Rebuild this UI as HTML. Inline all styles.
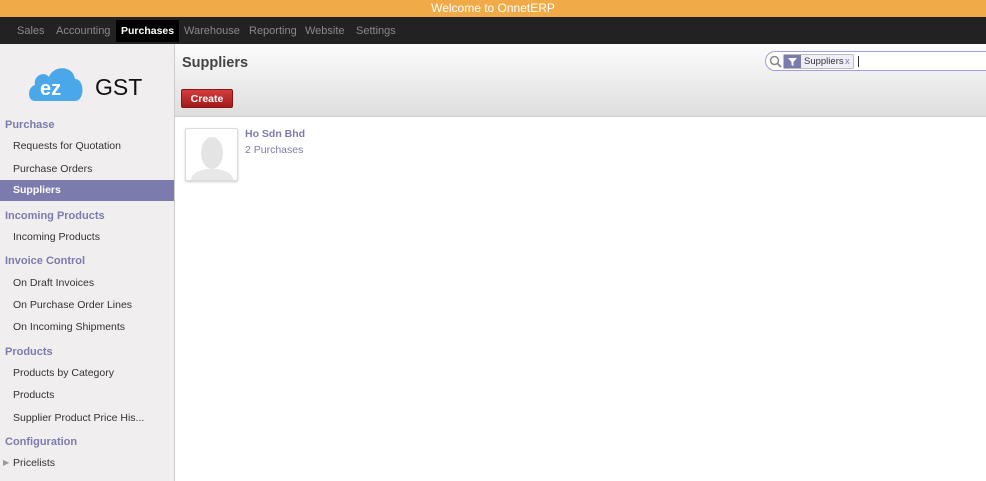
<!DOCTYPE html><html><head><style>
*{margin:0;padding:0;box-sizing:border-box}
body{width:986px;height:481px;overflow:hidden;font-family:"Liberation Sans",Arial,sans-serif;font-size:11px;background:#fff;position:relative}
.top{height:17px;background:#f0ab48;color:#fff;text-align:center;font-size:12px;line-height:17px}
.nav{height:27px;background:#222;position:relative}
.nav span{position:absolute;top:1px;line-height:27px;color:#8a8a8a;font-size:11px}
.nav .a{background:#000;color:#fff;font-weight:bold;padding:0 5px;top:3px;line-height:22px;font-size:10.5px}
.side{position:absolute;left:0;top:44px;width:175px;height:437px;background:#f0eeee;border-right:1px solid #ccc}
.s{position:absolute;left:0;width:174px;font-size:10.5px;color:#333;padding-left:13px;line-height:20px;margin-top:1px}
.h{color:#7c7bad;font-weight:bold;padding-left:5px;font-size:11px}
.sel{background:#7c7bad;color:#fff;font-weight:bold;margin-top:0;line-height:21px}
.hdr{position:absolute;left:175px;top:44px;right:0;height:73px;background:linear-gradient(#fcfcfc,#dedede);border-bottom:1px solid #cfcfcf}
</style></head><body>
<div class="top">Welcome to OnnetERP</div>
<div class="nav">
<span style="left:17px">Sales</span><span style="left:56px">Accounting</span><span class="a" style="left:116px">Purchases</span><span style="left:184px">Warehouse</span><span style="left:249px">Reporting</span><span style="left:305px">Website</span><span style="left:356px">Settings</span>
</div>
<div class="side">
<svg style="position:absolute;left:29px;top:16px" width="120" height="44" viewBox="0 0 120 44">
<path d="M6 41 C-2 41 -2 27 6 25 C4 15 16 11 20 17 C24 5 44 5 46 19 C56 19 56 41 46 41 Z" fill="#4aa8ea"/>
<text x="11" y="35" font-family="Liberation Sans" font-weight="bold" font-size="20" fill="#fff">ez</text>
<text x="66" y="35" font-family="Liberation Sans" font-size="23" fill="#111">GST</text>
</svg>
<div class="s h" style="top:70px">Purchase</div>
<div class="s" style="top:91px">Requests for Quotation</div>
<div class="s" style="top:114px">Purchase Orders</div>
<div class="s sel" style="top:136px">Suppliers</div>
<div class="s h" style="top:161px">Incoming Products</div>
<div class="s" style="top:182px">Incoming Products</div>
<div class="s h" style="top:206px">Invoice Control</div>
<div class="s" style="top:228px">On Draft Invoices</div>
<div class="s" style="top:250px">On Purchase Order Lines</div>
<div class="s" style="top:272px">On Incoming Shipments</div>
<div class="s h" style="top:297px">Products</div>
<div class="s" style="top:318px">Products by Category</div>
<div class="s" style="top:340px">Products</div>
<div class="s" style="top:363px">Supplier Product Price His...</div>
<div class="s h" style="top:387px">Configuration</div>
<div class="s" style="top:408px"><span style="position:absolute;left:3px;color:#999;font-size:8px">&#9654;</span>Pricelists</div>
</div>
<div class="hdr">
<div style="position:absolute;left:7px;top:11px;font-size:14.5px;font-weight:bold;color:#444">Suppliers</div>
<div style="position:absolute;left:6px;top:45px;width:52px;height:19px;background:linear-gradient(#d43c3c,#a31a1a);border:1px solid #8a1414;border-radius:2px;color:#fff;font-size:10.5px;font-weight:bold;text-align:center;line-height:18px">Create</div>
<div style="position:absolute;left:590px;top:7px;width:230px;height:20px;background:#fff;border:1px solid #a09ee8;border-radius:10px 0 0 10px;border-right:none">
<svg style="position:absolute;left:3px;top:3px" width="13" height="13"><circle cx="5.5" cy="5.5" r="4" fill="none" stroke="#888" stroke-width="1.5"/><line x1="8.5" y1="8.5" x2="12" y2="12" stroke="#888" stroke-width="1.8"/></svg>
<div style="position:absolute;left:17px;top:2px;width:71px;height:15px;background:#f0eef8;border:1px solid #bbb;border-radius:2px;font-size:9.5px;color:#333">
<div style="position:absolute;left:0;top:0;width:17px;height:13px;background:#7c7bad"><svg width="17" height="13"><path d="M4 3 H13 L9.5 7 V11 L7.5 10 V7 Z" fill="#fff"/></svg></div>
<span style="position:absolute;left:20px;top:1px">Suppliers</span><span style="position:absolute;left:61px;top:1px;color:#7c7bad">x</span></div>
<div style="position:absolute;left:92px;top:4px;width:1px;height:11px;background:#333"></div>
</div>
</div>
<div style="position:absolute;left:185px;top:128px;width:53px;height:53px;border:1px solid #ddd;border-radius:2px;box-shadow:0 1px 2px #ccc;background:#fff;overflow:hidden">
<svg width="53" height="53"><ellipse cx="26" cy="24" rx="11" ry="16" fill="#e4e4e4"/><path d="M4 53 C6 42 16 40 26 40 C36 40 46 42 48 53 Z" fill="#e8e8e8"/></svg></div>
<div style="position:absolute;left:245px;top:128px;color:#7c7bad;font-weight:bold;font-size:10.5px">Ho Sdn Bhd</div>
<div style="position:absolute;left:245px;top:144px;color:#7c7bad;font-size:10.5px">2 Purchases</div>
</body></html>
